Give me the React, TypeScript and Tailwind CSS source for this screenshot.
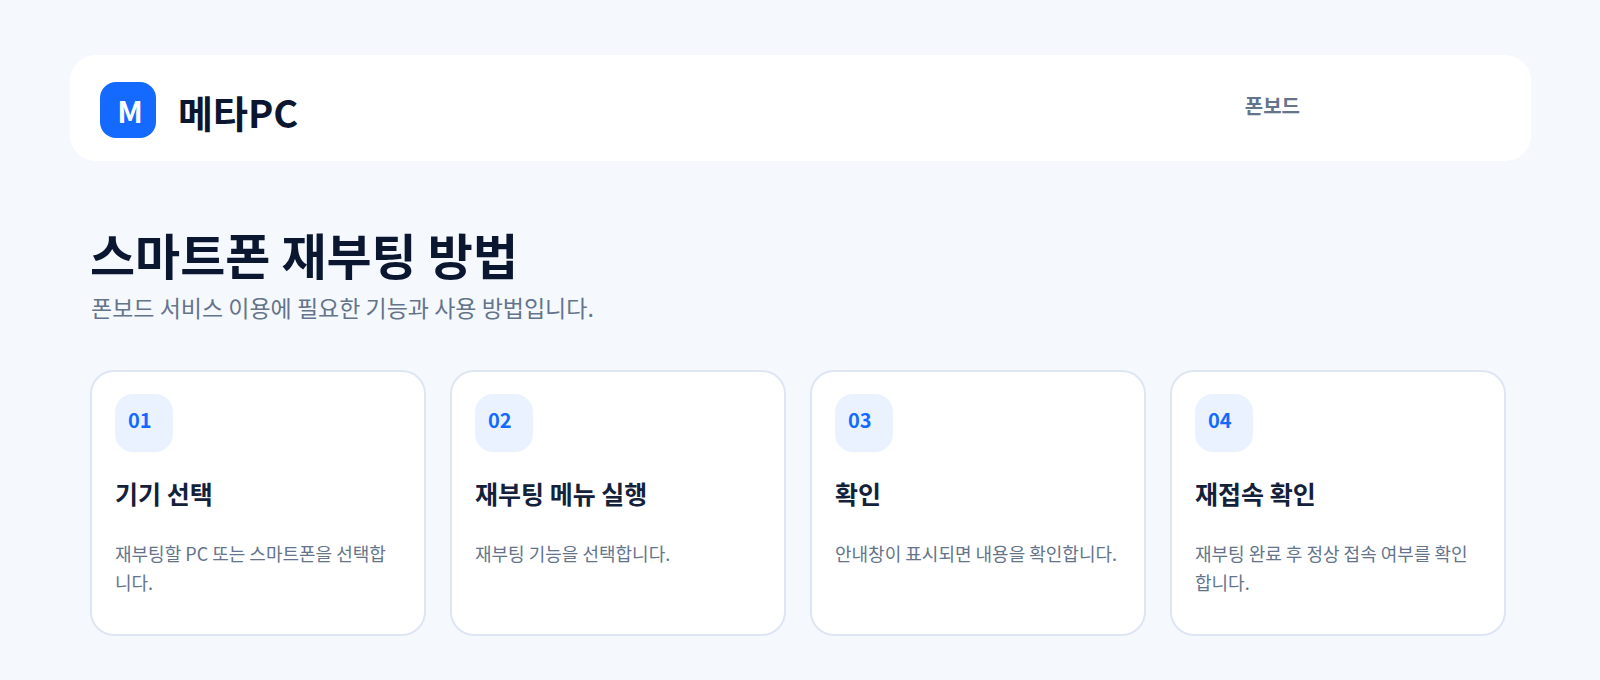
import React from 'react'

type PROPS_STEP = {
  no: string
  title: string
  text: string
}

const steps: PROPS_STEP[] = [
  { no: '01', title: '기기 선택', text: '재부팅할 PC 또는 스마트폰을 선택합니다.' },
  { no: '02', title: '재부팅 메뉴 실행', text: '재부팅 기능을 선택합니다.' },
  { no: '03', title: '확인', text: '안내창이 표시되면 내용을 확인합니다.' },
  {
    no: '04',
    title: '재접속 확인',
    text: '재부팅 완료 후 정상 접속 여부를 확인합니다.',
  },
]

const StepCard: React.FC<PROPS_STEP> = ({ no, title, text }) => (
  <li className="min-h-[266px] rounded-3xl border-2 border-[#dde6f2] bg-white px-[23px] pt-[22px] pb-6">
    <div className="h-[58px] w-[58px] rounded-[18px] bg-[#eaf2ff] pt-3 pl-[13px] text-xl leading-7 font-bold text-[#1469ff]">
      {no}
    </div>
    <h2 className="mt-[23px] text-[25px] leading-9 font-bold text-[#14213a]">
      {title}
    </h2>
    <p className="mt-7 text-lg leading-[29px] break-all text-[#64748b]">
      {text}
    </p>
  </li>
)

const App: React.FC = () => {
  return (
    <div className="min-h-screen bg-[#f5f9fe] pt-[55px] pr-[69px] pb-11 pl-[70px] font-['Noto_Sans_CJK_KR',sans-serif]">
      <header className="flex items-start justify-between rounded-[26px] bg-white pt-[27px] pr-[231px] pb-[19px] pl-[30px]">
        <div className="flex items-start gap-[22px]">
          <div className="flex h-14 w-14 items-center justify-center rounded-2xl bg-[#1469ff] pl-1 text-[30px] leading-none font-bold text-white">
            M
          </div>
          <p className="text-[38px] leading-[60px] font-bold text-[#0b1730]">
            메타PC
          </p>
        </div>
        <a
          href="#phone"
          className="text-xl leading-[48px] font-bold text-[#64748b]"
        >
          폰보드
        </a>
      </header>
      <main className="pt-[58px] pr-[25px] pl-5">
        <h1 className="text-[49px] leading-[70px] font-bold text-[#0b1730]">
          스마트폰 재부팅 방법
        </h1>
        <p className="pl-px text-[23px] leading-9 text-[#64748b]">
          폰보드 서비스 이용에 필요한 기능과 사용 방법입니다.
        </p>
        <ol className="mt-[45px] grid grid-cols-4 gap-6">
          {steps.map((step) => (
            <StepCard key={step.no} {...step} />
          ))}
        </ol>
      </main>
    </div>
  )
}

export default App
